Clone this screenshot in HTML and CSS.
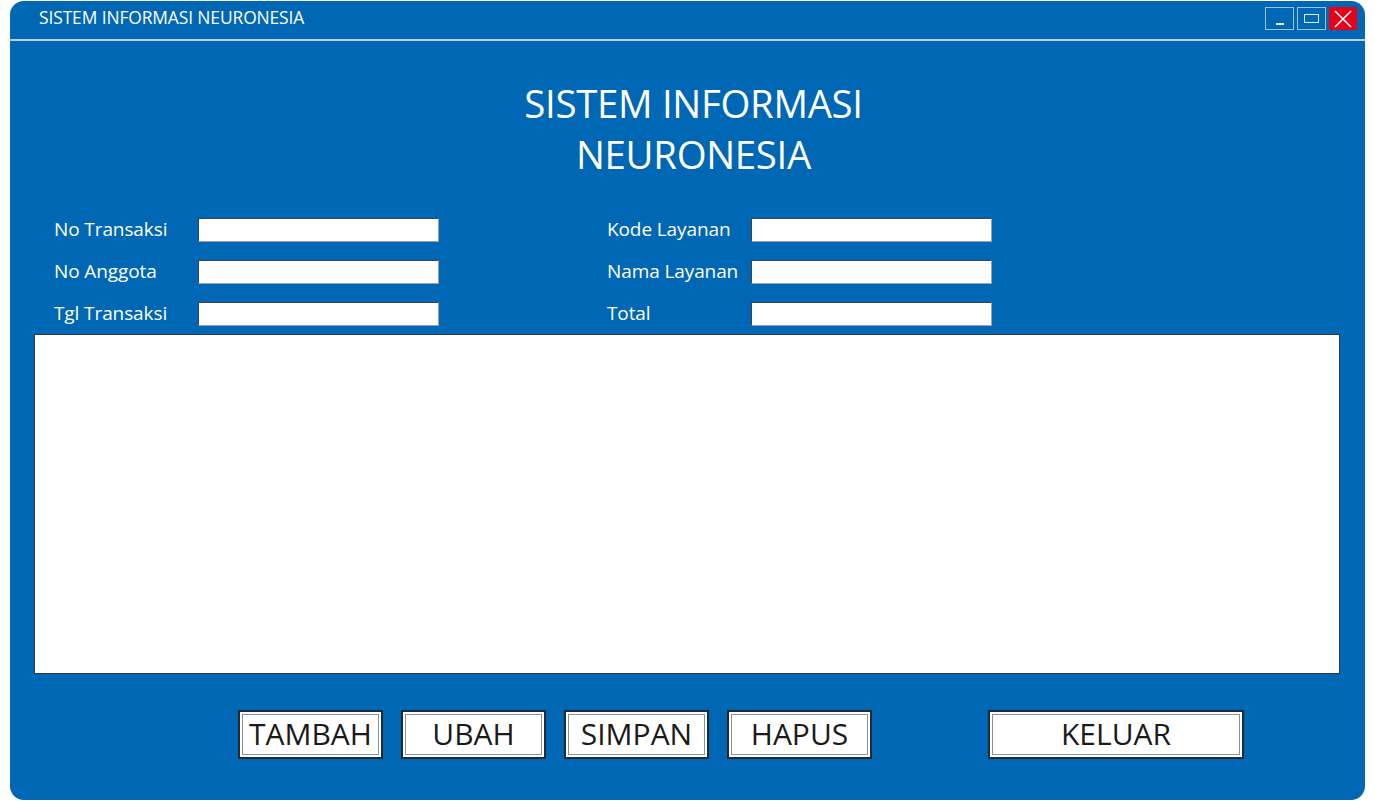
FILE: index.html
```html
<!DOCTYPE html>
<html>
<head>
<meta charset="utf-8">
<link rel="stylesheet" href="styles.css">
</head>
<body>
<div class="window">
  <div class="titlebar">
    <div class="title">SISTEM INFORMASI NEURONESIA</div>
    <div class="controls">
      <div class="ctl ctl-min"><span class="min-bar"></span></div>
      <div class="ctl ctl-max"><span class="max-box"></span></div>
      <div class="ctl ctl-close">
        <svg width="20" height="18" viewBox="0 0 20 18"><path d="M2 1 L18 17 M18 1 L2 17" stroke="#fff" stroke-width="1.6" fill="none"/></svg>
      </div>
    </div>
  </div>
  <div class="divider"></div>
  <h1 class="heading">SISTEM INFORMASI<br>NEURONESIA</h1>
  <div class="form">
    <div class="col">
      <div class="row"><label>No Transaksi</label><div class="input"></div></div>
      <div class="row"><label>No Anggota</label><div class="input"></div></div>
      <div class="row"><label>Tgl Transaksi</label><div class="input"></div></div>
    </div>
    <div class="col">
      <div class="row"><label>Kode Layanan</label><div class="input"></div></div>
      <div class="row"><label>Nama Layanan</label><div class="input"></div></div>
      <div class="row"><label>Total</label><div class="input"></div></div>
    </div>
  </div>
  <div class="table"></div>
  <div class="buttons">
    <div class="btn"><span>TAMBAH</span></div>
    <div class="btn"><span>UBAH</span></div>
    <div class="btn"><span>SIMPAN</span></div>
    <div class="btn"><span>HAPUS</span></div>
    <div class="btn btn-wide"><span>KELUAR</span></div>
  </div>
</div>
</body>
</html>
```
FILE: styles.css
```css
html, body {
  margin: 0;
  padding: 0;
  background: #ffffff;
}
body {
  font-family: "Open Sans", "Noto Sans", sans-serif;
}
.window {
  margin: 1px 0 0 10px;
  width: 1355px;
  height: 799px;
  background: #0067b4;
  border-radius: 14px;
  box-sizing: border-box;
  display: flex;
  flex-direction: column;
}
.titlebar {
  height: 38px;
  display: flex;
  align-items: flex-start;
  justify-content: space-between;
  padding: 0 8px 0 29px;
}
.title {
  color: #ffffff;
  font-size: 17.4px;
  margin-top: 4px;
  letter-spacing: -0.1px;
}
.controls {
  display: flex;
  gap: 3px;
  margin-top: 6px;
}
.ctl {
  width: 29px;
  height: 23px;
  box-sizing: border-box;
  border: 1px solid #9cc2e8;
  display: flex;
  align-items: center;
  justify-content: center;
  position: relative;
}
.min-bar {
  width: 8px;
  height: 2px;
  background: #e6f0fa;
  margin-top: 10px;
}
.max-box {
  width: 15px;
  height: 9px;
  border: 1.5px solid #e6f0fa;
  box-sizing: border-box;
}
.ctl-close {
  background: #e8001b;
  border-color: #e8001b;
  width: 28px;
}
.divider {
  height: 2px;
  background: #b9d3ee;
}
.heading {
  margin: 37px 0 0 0;
  padding-left: 12px;
  text-align: center;
  color: #ffffff;
  font-weight: 400;
  font-size: 38.4px;
  line-height: 51px;
  letter-spacing: -0.3px;
}
.form {
  display: flex;
  gap: 168px;
  margin: 38px 0 0 44px;
}
.col {
  display: flex;
  flex-direction: column;
  gap: 18px;
}
.row {
  display: flex;
  align-items: center;
  height: 24px;
}
.row label {
  width: 144px;
  color: #ffffff;
  font-size: 19px;
  letter-spacing: -0.1px;
  margin-top: -3px;
}
.input {
  width: 241px;
  height: 24px;
  box-sizing: border-box;
  background: #ffffff;
  border: 1px solid #3a4450;
  border-bottom-color: #9aa0a6;
  border-right-color: #9aa0a6;
}
.table {
  margin: 8px 25px 0 24px;
  height: 340px;
  background: #ffffff;
  border: 1px solid #2f3740;
  box-sizing: border-box;
}
.buttons {
  display: flex;
  margin: 36px 0 0 228px;
}
.btn {
  width: 145px;
  height: 49px;
  box-sizing: border-box;
  border: 2px solid #1e2a36;
  background: #ffffff;
  padding: 2px;
  margin-right: 18px;
}
.btn span {
  display: flex;
  align-items: center;
  justify-content: center;
  height: 100%;
  box-sizing: border-box;
  border: 1px solid #8c9196;
  color: #1a1a1a;
  font-size: 30px;
  letter-spacing: 0;
  padding-bottom: 2px;
}
.btn:nth-child(4) {
  margin-right: 116px;
}
.btn-wide {
  width: 256px;
}
```
